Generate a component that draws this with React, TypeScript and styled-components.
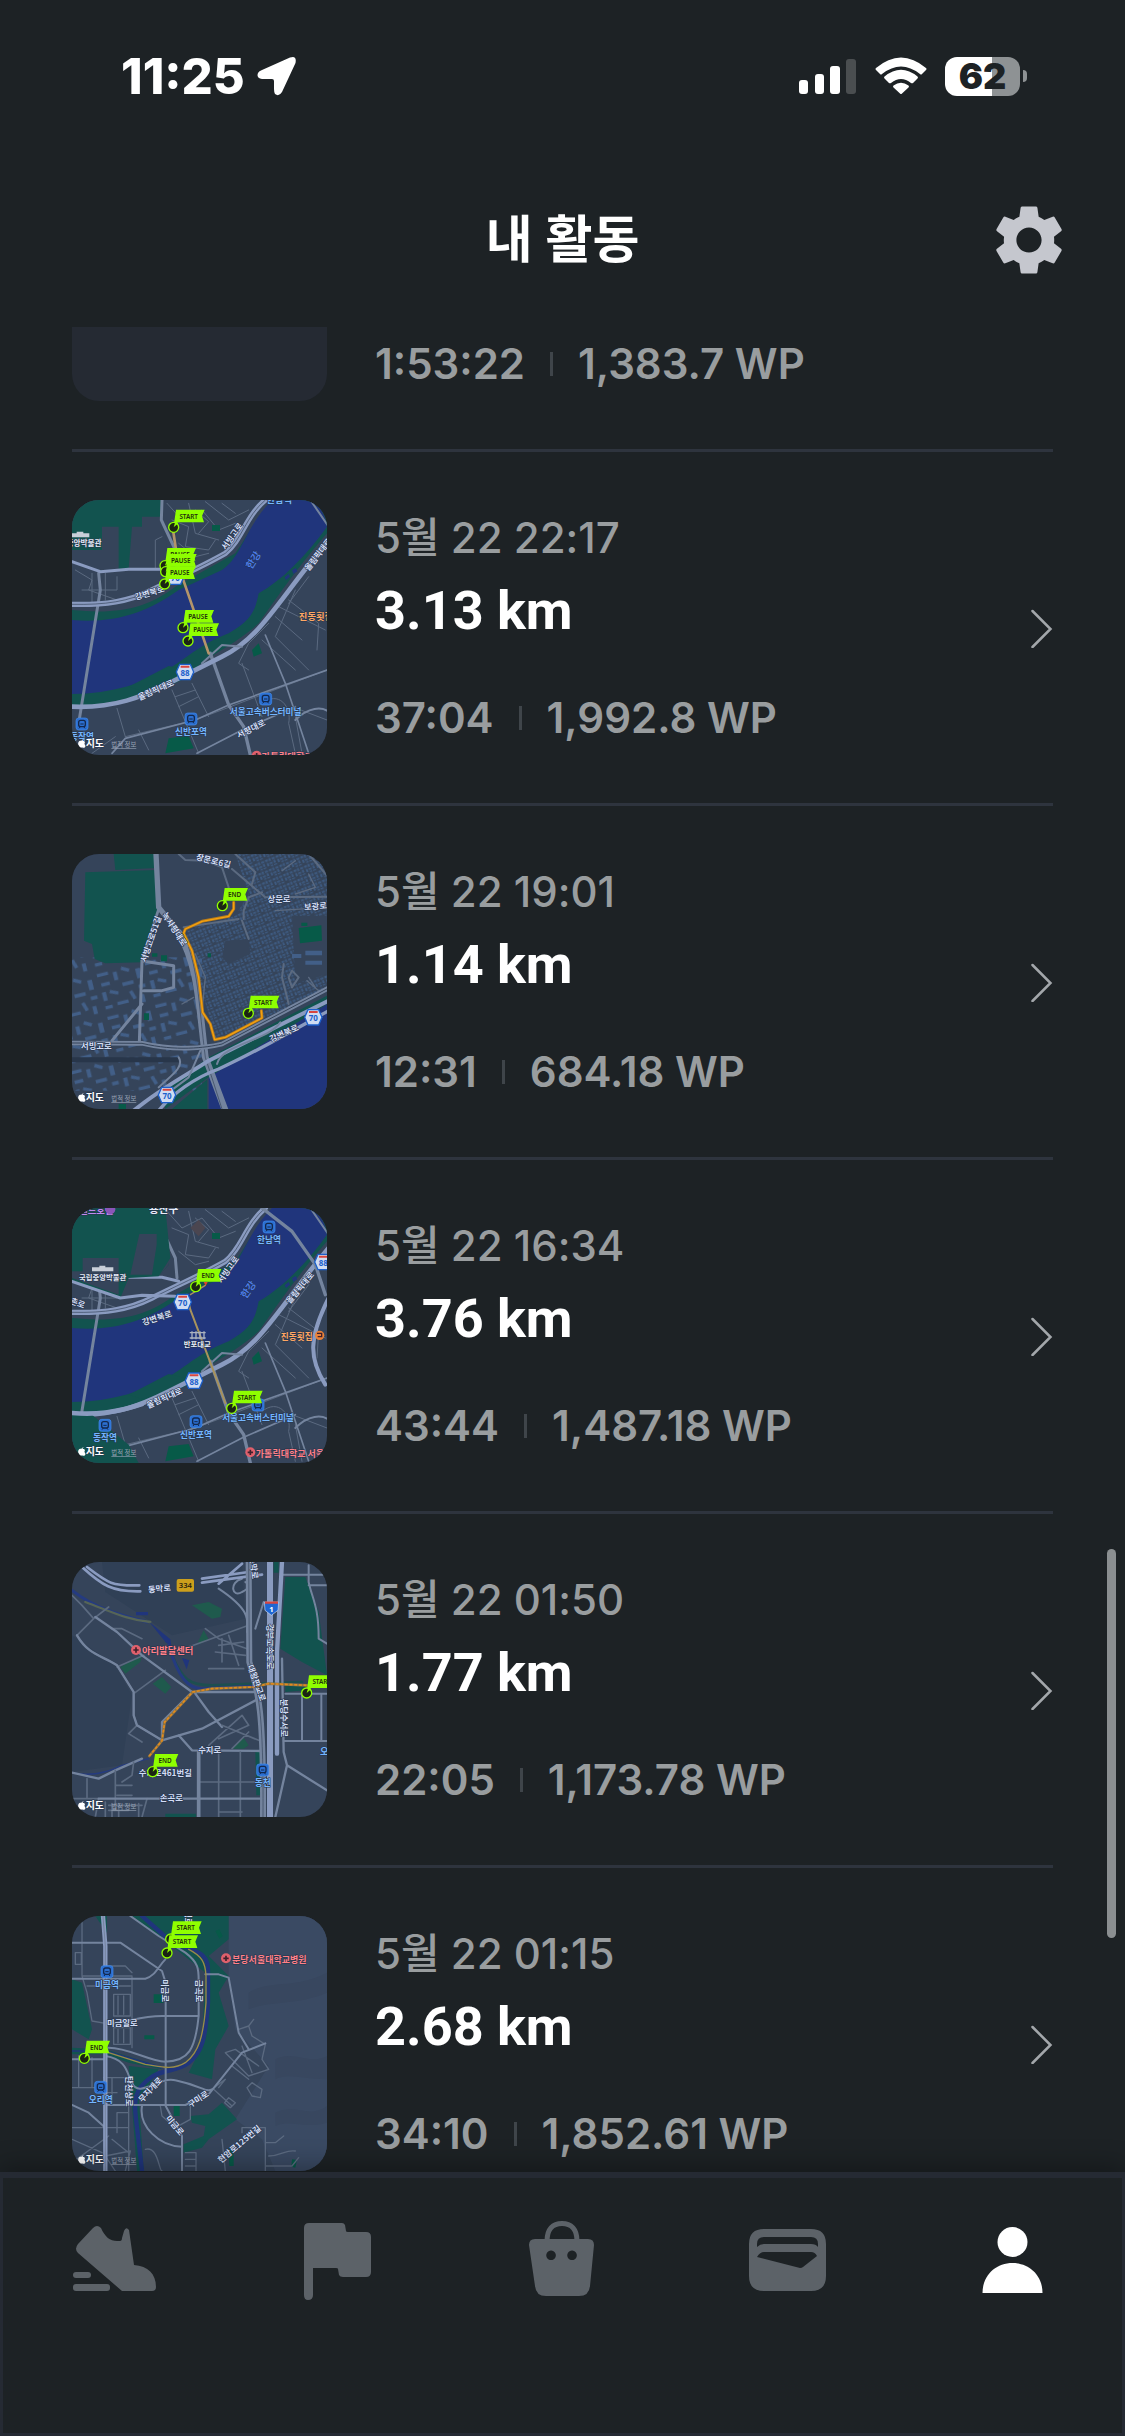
import type { ReactNode } from "react";
import styled, { createGlobalStyle } from "styled-components";
import { MdSettings } from "react-icons/md";

type Point = [number, number];

interface Activity {
  date: string;
  distance: string;
  time: string;
  wp: string;
  map: ReactNode;
}

/* ---------- map parts ---------- */

const C = {
  land: "#35445a",
  water: "#20357c",
  park: "#12534f",
  grass: "#075a48",
  major: "#8a9bc0",
  mid: "#74849e",
  minor: "#5b6a80",
  route: "#f5a20f",
  bridge: "#b3946a",
  flag: "#8fff00",
};

const Roads = ({ d, w = 3, c = C.minor }: { d: string; w?: number; c?: string }) => (
  <path d={d} fill="none" stroke={c} strokeWidth={w} strokeLinejoin="round" strokeLinecap="round" />
);

const Flag = ({ at, label }: { at: Point; label: string }) => {
  const [x, y] = at;
  const w = label === "END" ? 74 : 90;
  return (
    <g>
      <path
        d={`M${x} ${y - 4}L${x + 7} ${y - 53}H${x + w + 3}L${x + w - 5} ${y - 34}L${x + w + 1} ${y - 15}H${x + 12}L${x + 5} ${y}Z`}
        fill={C.flag}
      />
      <circle cx={x} cy={y} r="15" fill="#1b2413" stroke={C.flag} strokeWidth="4" />
      <path d={`M${x} ${y}L${x + 5} ${y - 17}L${x + 14} ${y - 12}Z`} fill={C.flag} />
      <MapText x={x + w / 2} y={y - 26} fontSize="19" fontWeight="600" fill="#22300c" textAnchor="middle">
        {label}
      </MapText>
    </g>
  );
};

const RoadName = ({ at, turn = 0, children }: { at: Point; turn?: number; children: string }) => (
  <Outlined
    x={at[0]}
    y={at[1]}
    fontSize="25"
    fill="#d3def6"
    textAnchor="middle"
    dominantBaseline="central"
    transform={`rotate(${turn} ${at[0]} ${at[1]})`}
  >
    {children}
  </Outlined>
);

const Place = ({ at, size = 28, c = "#e6ecf8", children }: { at: Point; size?: number; c?: string; children: string }) => (
  <Outlined x={at[0]} y={at[1]} fontSize={size} fill={c} textAnchor="middle" dominantBaseline="central">
    {children}
  </Outlined>
);

const Station = ({ at, name }: { at: Point; name?: string }) => {
  const [x, y] = at;
  return (
    <g>
      <rect x={x - 18} y={y - 18} width="36" height="36" rx="8" fill="#2c6fd0" stroke="#3f8df0" strokeWidth="2" />
      <rect x={x - 10} y={y - 11} width="20" height="19" rx="6" fill="none" stroke="#12284f" strokeWidth="4" />
      <path d={`M${x - 9} ${y + 13}L${x - 5} ${y + 8}M${x + 9} ${y + 13}L${x + 5} ${y + 8}M${x - 5} ${y}H${x + 5}`} stroke="#12284f" strokeWidth="3" />
      {name && (
        <Place at={[x, y + 36]} size={26} c="#74b6ff">
          {name}
        </Place>
      )}
    </g>
  );
};

const Hospital = ({ at }: { at: Point }) => (
  <g>
    <circle cx={at[0]} cy={at[1]} r="15" fill="#e0606c" />
    <path d={`M${at[0] - 8} ${at[1]}h16M${at[0]} ${at[1] - 8}v16`} stroke="#40202c" strokeWidth="5" />
  </g>
);

const Shield = ({ at, no }: { at: Point; no: string }) => {
  const [x, y] = at;
  return (
    <g>
      <path d={`M${x - 16} ${y - 23}H${x + 16}L${x + 26} ${y}L${x + 16} ${y + 23}H${x - 16}L${x - 26} ${y}Z`} fill="#cfdcf2" stroke="#1c5fcb" strokeWidth="4" />
      <path d={`M${x - 13} ${y - 16}h26`} stroke="#d8463f" strokeWidth="6" />
      <MapText x={x} y={y + 12} fontSize="24" fontWeight="700" fill="#1c5fcb" textAnchor="middle">
        {no}
      </MapText>
    </g>
  );
};

const MapFrame = ({ children }: { children: ReactNode }) => (
  <Map viewBox="30 30 765 765" aria-hidden="true">
    <defs>
      <pattern id="blocks" width="34" height="30" patternUnits="userSpaceOnUse" patternTransform="rotate(-22)">
        <path d="M2 3h8v7H2zM13 2h6v9h-6zM23 4h9v6h-9zM3 14h6v10H3zM12 15h9v5h-9zM25 13h6v8h-6zM13 23h7v5h-7zM23 24h9v4h-9z" fill="#40608a" />
      </pattern>
      <pattern id="halls" width="148" height="132" patternUnits="userSpaceOnUse" patternTransform="rotate(-14)">
        <path
          d="M6 8h34v10H6zM54 14h12v26H54zM84 4l22 12-5 9-22-12zM122 20h14v30h-14zM12 38h26v11H12zM74 52h34v10H74zM8 66h12v26H8zM34 64l24 10-4 9-24-10zM120 70h20v10h-20zM46 104h34v10H46zM98 80l8 26-10 3-8-26zM8 108h22v10H8zM118 100h12v24h-12z"
          fill="#425f88"
        />
      </pattern>
    </defs>
    <rect x="30" y="30" width="765" height="765" fill={C.land} />
    {children}
    <path d="M58 752c4-3 6-6 6-6s1 4-3 7c4-1 8 1 8 4-3 3-1 8 2 10-2 6-5 7-8 6-3-1-4 0-7 0-8-3-11-18-2-21z" fill="#fff" />
    <Outlined x="71" y="770" fontSize="30" fill="#fff">
      지도
    </Outlined>
    <MapText x="148" y="771" fontSize="19" fill="#98a3b5" textDecoration="underline">
      법적 정보
    </MapText>
  </Map>
);

/* Han river around Banpo bridge, shared by two of the walks */
const RiverBase = () => (
  <>
    <path d="M30 30H300L296 130L320 200L290 235H200L120 245L30 215Z" fill={C.park} />
    <path d="M120 110H170V240L110 240L30 215V180H120Z" fill={C.land} />
    <path d="M210 110H240V80H300L320 200L290 235H200Z" fill={C.land} />
    <path d="M30 360C180 375 260 350 340 290L520 190C560 130 590 70 640 30H795V130C700 240 640 330 590 400C500 480 420 500 380 560C260 620 150 640 30 650Z" fill={C.park} />
    <path d="M30 390C160 400 250 370 350 300L480 240C540 200 550 110 630 30H755C790 70 790 90 795 110C730 200 660 270 590 310C580 360 570 390 500 430C420 460 380 500 330 530C250 580 150 610 30 612Z" fill={C.water} />
    <path d="M200 590L320 528L370 540L330 575L240 604Z" fill={C.park} />
    <path d="M668 262l12-10 4 8-12 10zM690 240l12-6 4 10-12 8z" fill={C.water} />
    <Roads d="M315 40L360 90L420 60L470 120L520 100M380 40L400 130L470 150M430 35L500 90L560 60M330 90L380 110L370 170L440 180L460 150M400 60L440 95L410 130M480 40L520 70M350 160L400 200L440 190M280 235V150L300 140" />
    <Roads d="M40 240L90 270L80 300L165 330M60 300H165V260M90 350V250M130 250V330" />
    <Roads d="M540 520L600 680M620 400L560 460L530 520L560 540M640 380L720 450M680 330L770 400L765 480M700 300L640 440L740 540M600 450L700 540M740 260L680 340M650 350L790 420" />
    <Roads d="M165 655L190 740M190 740L400 690L795 540M330 600L410 790M390 580L440 680M340 620L400 600M350 650L410 620M90 790L160 740M230 720L260 780M600 640C650 600 690 650 680 700L700 790M690 650L795 690M720 790L700 680" />
    <Roads w={5} c={C.mid} d="M150 790L190 745L400 690L500 645L795 540M405 790L540 720L700 650M610 435L670 580L740 790" />
    <Roads w={9} c={C.mid} d="M300 30L298 90L340 180L345 240M110 250L115 300L50 700" />
    <Roads w={10} c={C.mid} d="M445 490L500 645L545 710L565 795" />
    <Roads w={9} c={C.major} d="M30 215L115 245L200 238L300 238L350 250" />
    <Roads w={16} c={C.major} d="M30 343C130 345 200 335 270 300C340 265 420 230 490 190C540 150 550 80 610 30" />
    <Roads w={14} c={C.major} d="M30 650C160 655 240 620 320 580L480 500C600 440 640 340 800 150" />
    <Roads w={6} c={C.mid} d="M420 520L480 465L540 470M745 30L800 110M700 690C740 650 780 650 800 665" />
    <Roads w={2} c={C.land} d="M30 343C130 345 200 335 270 300C340 265 420 230 490 190C540 150 550 80 610 30" />
    <path d="M320 745L380 738L395 775L310 790ZM570 480L590 460L600 490L575 500Z" fill={C.grass} />
    <path d="M450 105h24v18h-24z" fill={C.grass} />
  </>
);

const RiverNightMap = () => (
  <MapFrame>
    <RiverBase />
    <Roads w={8} c={C.bridge} d="M333 120L350 230L440 490" />
    <RoadName at={[262, 306]} turn={-17}>강변북로</RoadName>
    <RoadName at={[508, 137]} turn={-55}>서빙고로</RoadName>
    <RoadName at={[280, 597]} turn={-24}>올림픽대로</RoadName>
    <RoadName at={[766, 192]} turn={-52}>올림픽대로</RoadName>
    <RoadName at={[566, 714]} turn={-27}>서평대로</RoadName>
    <Outlined x="580" y="218" fontSize="30" fill="#4b7bea" textAnchor="middle" transform="rotate(-58 580 214)">한강</Outlined>
    <path d="M30 130h52v12H30zM44 125h20v8H44z" fill="#c8ced8" />
    <Place at={[66, 158]} size={23}>중앙박물관</Place>
    <Place at={[652, 26]} c="#74b6ff">한남역</Place>
    <Shield at={[369, 546]} no="88" />
    <Shield at={[340, 260]} no="70" />
    <Place at={[762, 378]} c="#ffa763">진동횟집</Place>
    <Station at={[611, 627]} name="서울고속버스터미널" />
    <Station at={[387, 687]} name="신반포역" />
    <Station at={[60, 702]} name="동작역" />
    <Hospital at={[584, 797]} />
    <Place at={[676, 797]} c="#ff8088">가톨릭대학교</Place>
    <Flag at={[335, 112]} label="START" />
    <Flag at={[309, 227]} label="PAUSE" />
    <Flag at={[311, 245]} label="PAUSE" />
    <Flag at={[308, 282]} label="PAUSE" />
    <Flag at={[363, 413]} label="PAUSE" />
    <Flag at={[378, 453]} label="PAUSE" />
  </MapFrame>
);

const ItaewonMap = () => (
  <MapFrame>
    <rect x="30" y="340" width="390" height="400" fill="url(#halls)" />
    <path d="M520 30H795V440L460 585L390 330L370 260L520 215L560 150Z" fill="url(#blocks)" opacity="0.8" />
    <path d="M490 290L560 285L565 330L500 360L480 340ZM690 215H795V390L700 420Z" fill={C.land} />
    <path d="M690 330h28v12h-28zM730 320h50v14h-50zM730 350h50v12h-50z" fill="#425f88" />
    <path d="M155 30H278L282 72L160 78ZM70 85L285 78L295 190L240 355L130 358L98 345L90 300L66 290Z" fill={C.park} />
    <path d="M30 640H350V655H30Z" fill="#28364a" />
    <path d="M440 700L795 480V795H440Z" fill={C.water} />
    <path d="M310 795L440 700L795 480V455L440 640L300 740Z" fill={C.park} />
    <path d="M330 795L436 706V795Z" fill={C.park} />
    <path d="M710 252L778 244L780 290L714 298ZM718 236h18v10h-18zM297 334h18v18h-18zM270 328h16v10h-16zM246 508h15v20h-15zM170 780h22v15h-22zM437 328h10v12h-10z" fill={C.grass} />
    <Roads w={6} d="M350 30L370 48L430 50L480 70L500 130L490 160M510 75L610 160L795 158M545 225V200L560 160L600 145M540 230L560 285M520 30L580 85L570 120M680 480L660 400L665 360M690 380L710 400L690 430L680 400ZM740 30L795 95M365 250L530 225" />
    <Roads w={4} d="M740 90L760 130L700 150M660 80L700 50M740 400L760 430M735 410L770 440M400 330L430 400L420 500M360 480L395 460M640 200L795 190" />
    <Roads w={9} c={C.mid} d="M240 350L232 595M240 480L150 590M245 440H300L335 430V365L245 352" />
    <Roads w={16} c={C.mid} d="M282 30L290 190L350 265" />
    <Roads w={8} c={C.mid} d="M290 195L240 350" />
    <Roads w={20} c={C.mid} d="M350 265C410 370 410 480 430 640L490 800" />
    <Roads w={2} c={C.land} d="M380 310C410 400 410 480 430 640L480 795" />
    <Roads w={14} c={C.mid} d="M30 597L240 598C340 622 430 612 480 600L800 432" />
    <Roads w={3} c={C.land} d="M30 597L240 598C340 622 430 612 480 600L800 432" />
    <Roads w={12} c={C.major} d="M215 800C300 730 380 690 440 650C560 590 680 530 800 470" />
    <Roads w={10} c={C.major} d="M290 800C330 750 400 700 470 675C590 620 700 555 800 500" />
    <Roads w={6} c={C.mid} d="M415 620L380 700L300 760M465 660C480 600 620 590 655 535M350 640C370 670 320 700 290 730" />
    <Roads w={9} c="#b57a1c" d="M515 175V195L500 217L420 232L370 255L365 268L390 320L410 400L422 505L445 540L458 587L490 580L600 522L598 500" />
    <Roads w={4} c={C.route} d="M515 175V195L500 217L420 232L370 255L365 268L390 320L410 400L422 505L445 540L458 587L490 580L600 522L598 500" />
    <RoadName at={[455, 48]} turn={14}>장문로6길</RoadName>
    <RoadName at={[651, 162]}>상문로</RoadName>
    <RoadName at={[760, 184]} turn={-5}>보광로</RoadName>
    <RoadName at={[264, 284]} turn={-71}>서빙고로51길</RoadName>
    <RoadName at={[340, 254]} turn={57}>녹사평대로</RoadName>
    <RoadName at={[103, 603]}>서빙고로</RoadName>
    <RoadName at={[665, 565]} turn={-24}>강변북로</RoadName>
    <Shield at={[754, 520]} no="70" />
    <Shield at={[315, 753]} no="70" />
    <Flag at={[481, 185]} label="END" />
    <Flag at={[559, 508]} label="START" />
  </MapFrame>
);

const RiverDayMap = () => (
  <MapFrame>
    <RiverBase />
    <path d="M30 30H310L325 180L290 235L200 240L175 300L30 250Z" fill={C.park} />
    <path d="M62 180H170V290L30 240V220H62ZM232 108H284V140L270 230H205Z" fill={C.land} />
    <Roads w={9} c={C.major} d="M30 250L175 300L240 292L340 295" />
    <path d="M30 640L90 650L200 740L230 795H30Z" fill={C.park} />
    <Roads w={14} c={C.major} d="M30 645C100 650 160 645 240 618" />
    <path d="M385 90L410 65L430 90L410 115Z" fill="#4b4650" />
    <Roads w={10} c={C.mid} d="M600 30L690 100L760 200L790 290" />
    <Roads w={12} c={C.major} d="M800 300C740 420 740 480 790 560" />
    <Roads w={6} c="#a8935c" d="M375 290L385 335L455 520L490 615" />
    <Roads w={4} c="#a8935c" d="M385 290L430 262" />
    <RoadName at={[284, 357]} turn={-18}>강변북로</RoadName>
    <RoadName at={[496, 213]} turn={-55}>서빙고로</RoadName>
    <RoadName at={[306, 597]} turn={-24}>올림픽대로</RoadName>
    <RoadName at={[712, 267]} turn={-50}>올림픽대로</RoadName>
    <RoadName at={[48, 312]} turn={20}>촌로</RoadName>
    <Outlined x="563" y="284" fontSize="30" fill="#4b7bea" textAnchor="middle" transform="rotate(-55 563 278)">한강</Outlined>
    <Place at={[90, 36]} c="#c08af0">그랜드호텔</Place>
    <circle cx="145" cy="34" r="15" fill="#8a55b8" />
    <Place at={[305, 32]} size={32}>용산구</Place>
    <path d="M90 208h64v12H90zM112 203h18v8h-18z" fill="#c8ced8" />
    <Place at={[122, 235]} size={22}>국립중앙박물관</Place>
    <path d="M383 404h48M383 420h48M390 400v24M402 400v24M414 400v24M426 400v24" stroke="#aab2bf" strokeWidth="4" />
    <Place at={[406, 436]} size={22}>반포대교</Place>
    <Shield at={[362, 312]} no="70" />
    <Shield at={[396, 548]} no="88" />
    <Shield at={[784, 192]} no="88" />
    <Place at={[704, 413]} size={26} c="#ffa763">진동횟집</Place>
    <circle cx="773" cy="412" r="14" fill="#e9823a" />
    <path d="M765 406h14v10h-12" fill="none" stroke="#40202c" strokeWidth="4" />
    <Station at={[621, 87]} name="한남역" />
    <Station at={[588, 621]} name="서울고속버스터미널" />
    <Station at={[402, 671]} name="신반포역" />
    <Station at={[129, 682]} name="동작역" />
    <Hospital at={[565, 763]} />
    <Place at={[684, 765]} size={27} c="#ff8088">가톨릭대학교 서울</Place>
    <path d="M425 252h12l-6 12z" fill="#e2452d" />
    <Flag at={[401, 266]} label="END" />
    <Flag at={[509, 631]} label="START" />
  </MapFrame>
);

const SujiMap = () => (
  <MapFrame>
    <path d="M120 30H540L550 200L330 250L130 120ZM30 250L160 340L210 430L180 640L30 660Z" fill="#304056" />
    <path d="M670 75H730L770 180L795 370L720 330L655 290ZM635 30h15v32h-15zM310 785H402V795H310ZM670 395L730 400V415L670 420ZM580 600H597V730H583Z" fill={C.park} />
    <path d="M390 160L440 150L480 170L475 195L450 200ZM408 270L425 235L440 262L415 275ZM300 375L328 405L310 425L272 395ZM175 345L240 310L235 330L190 365ZM510 590L545 558L560 580L545 590Z" fill="#1f5a4d" />
    <Roads w={8} c="#1d4f50" d="M330 310C360 380 380 400 450 400L720 390" />
    <Roads w={9} c="#253b80" d="M30 115C100 170 180 190 255 210M320 280C350 380 380 410 420 410L575 403" />
    <Roads w={7} c="#566556" d="M70 150C150 180 200 205 265 210" />
    <path d="M262 210L325 262L328 282L312 272ZM222 180h36v10h-36zM360 318L382 325L374 352Z" fill={C.water} />
    <Roads w={4} c="#253b80" d="M30 662C90 675 140 660 180 640L260 620" />
    <Roads w={5} d="M45 250L95 200L140 165M95 200L60 160L30 130M45 250C80 310 120 310 165 340L215 420V490L225 520L300 565M165 345L245 310M215 425L310 355M150 230L180 230L240 260M225 520L200 545L240 570M380 285L560 220M430 230L470 260L555 290M440 350H545M480 260V330M500 250L530 340M460 300L550 310M470 280L545 270" />
    <Roads w={7} c={C.mid} d="M100 195L165 240L240 310L390 420L300 510V565M390 420H575M400 425L440 480L480 525M300 565L420 530L590 440M350 550L390 595L595 597M30 662L110 680L160 655L240 620M45 250C80 310 120 310 165 340L215 420V490L225 520L300 565" />
    <Roads w={5} d="M480 520L590 565M440 580L540 490L560 520L470 560M510 590L560 540M160 655V770M215 630L210 670L180 690M160 700H210M165 730H210M30 740L110 740L100 795M75 680V740M470 600V740M535 600V740M410 690H597M470 740V795M535 740V795M470 780H540M130 750V795M150 755V795M170 755V795M230 755V795M140 760H240M140 775H200M255 740L240 795" />
    <Roads w={11} c={C.mid} d="M410 600V795" />
    <Roads w={7} c={C.mid} d="M110 740H600" />
    <Roads w={6} c={C.mid} d="M470 110C560 170 560 200 555 240M540 80C500 90 510 140 540 120C560 110 565 100 550 90M605 150L580 230M740 40V90C750 140 770 160 770 260L795 275M660 68H795M740 100H795M670 425H795M720 430V565M778 430V565M665 567H795" />
    <Roads w={8} c={C.major} d="M60 45C120 100 150 120 235 118M75 45C140 95 150 102 232 100M420 92L600 68M420 80L560 60M470 95L540 35" />
    <Roads w={18} c={C.mid} d="M560 30L562 330C590 420 605 480 603 795" />
    <Roads w={2} c={C.land} d="M560 30L562 330C590 420 605 480 603 795" />
    <Roads w={18} c={C.major} d="M624 30V795" />
    <Roads w={13} c={C.major} d="M660 30L645 300V605" />
    <Roads w={7} c={C.mid} d="M660 320L665 600L675 640L640 795M675 640L795 715" />
    <Roads w={8} c="#8e7444" d="M262 612L300 566L308 510L392 420L450 410L575 405L620 395L735 400" />
    <path d="M262 612L300 566L308 510L392 420L450 410L575 405L620 395L735 400" fill="none" stroke="#e38a1c" strokeWidth="5" strokeDasharray="9 5" />
    <RoadName at={[292, 107]} turn={-5}>동막로</RoadName>
    <rect x="344" y="81" width="52" height="38" rx="6" fill="#cc9f1c" />
    <MapText x="370" y="109" fontSize="23" fontWeight="600" fill="#2b2410" textAnchor="middle">334</MapText>
    <RoadName at={[578, 46]} turn={82}>동막로</RoadName>
    <RoadName at={[587, 392]} turn={70}>대왕판교로</RoadName>
    <RoadName at={[626, 284]} turn={90}>경부고속도로</RoadName>
    <RoadName at={[668, 498]} turn={90}>분당수서로</RoadName>
    <RoadName at={[443, 591]}>수지로</RoadName>
    <RoadName at={[310, 661]}>수지로461번길</RoadName>
    <RoadName at={[328, 736]}>손곡로</RoadName>
    <path d="M607 150H650L648 175L628 190L609 175Z" fill="#1f66d2" stroke="#c7d8f5" strokeWidth="2" />
    <path d="M609 152h39" stroke="#d8463f" strokeWidth="7" />
    <MapText x="628" y="179" fontSize="23" fontWeight="700" fill="#fff" textAnchor="middle">1</MapText>
    <Hospital at={[222, 294]} />
    <Place at={[317, 295]} c="#ff8088">아리발달센터</Place>
    <Station at={[602, 654]} name="동천" />
    <Place at={[800, 598]} c="#74b6ff">오리</Place>
    <Flag at={[734, 423]} label="START" />
    <Flag at={[272, 659]} label="END" />
  </MapFrame>
);

const MigeumMap = () => (
  <MapFrame>
    <path d="M500 30H795V795H640L600 700L520 640L620 480L520 370L500 210Z" fill="#3a4a63" />
    <path d="M560 260C620 220 700 250 795 200V260C700 300 640 280 560 310ZM640 460C700 430 740 480 795 450V520C720 520 680 500 640 520ZM640 620C700 590 740 640 795 600V650C720 670 690 640 640 660Z" fill="#38475f" />
    <path d="M30 220L60 230L90 370L80 400L30 370ZM210 30H500V100L440 150L500 210L470 260L500 360L460 430L450 520L380 500L420 420L430 200L330 120ZM100 30L135 30V80L110 45ZM200 480L290 490L260 540L230 570L245 795H225L210 600ZM385 630L440 625L480 590L525 640L440 700L420 725L365 740V715L425 690L430 660L390 650ZM30 425L130 430L290 480L300 490L200 470L130 445H30Z" fill={C.park} />
    <path d="M275 265h30v26h-30zM247 388h30v12h-30zM335 600h18v30h-18zM500 725L515 720V780H502ZM460 75L472 70L482 90L472 98ZM690 760L705 762L700 785L688 782Z" fill={C.grass} />
    <Roads w={13} c={C.water} d="M240 30L330 110C430 140 440 150 438 210V290C430 400 420 440 380 470C340 500 290 490 260 520C220 550 215 580 222 640L240 795" />
    <Roads w={5} c={C.water} d="M30 435H130L300 485" />
    <Roads w={4} d="M60 30V210H210V425M75 240H205M60 210L75 260L90 345L130 352M155 265H205V330H155ZM168 270V325M185 270V325M155 365H205V415H155ZM168 370V410M185 370V410M130 260V180H190L210 200M40 140H58V175H40ZM50 450V545M90 455V545M30 545H125M125 515H200V620H165V680M150 515V590M130 560H165M160 795L130 750L205 735L190 795M30 700L120 740M200 600V795M30 665H200M150 700L200 740M30 770L140 690" />
    <Roads w={4} d="M530 370L560 360L575 340M560 360L570 390L610 415L600 460L620 490L560 510L490 440L520 430L590 480M540 420L570 500M510 480L560 520M470 545L490 520L450 550M555 545L570 530L600 550L595 575L570 570ZM500 575L520 590L505 605L488 590ZM455 550L510 600M540 665H610V795M540 680V665M610 710H640L665 690M620 750C660 750 670 730 700 735M370 740H402V795M370 760H402M370 780H402M480 700L490 795M250 730C290 720 290 795 300 795M385 600V640L340 665L300 630L295 600M610 780H690L710 755" />
    <Roads w={6} c={C.mid} d="M205 30L290 90L370 140C410 170 410 190 410 225V330C400 430 380 465 310 467C260 465 200 425 140 425M30 110H175L300 195L311 230V600L360 690V795M30 218H250C280 210 290 180 310 160M130 355C200 350 230 330 300 330H410M130 450C200 460 195 510 210 530C230 580 290 510 340 523C420 540 430 560 450 550M130 597H370L440 565L540 440L610 412M430 205H470L500 215L530 380L560 430M240 600C230 660 290 720 360 722M30 597L80 620L130 665M30 460H130" />
    <Roads w={13} c={C.major} d="M123 30L130 120V795" />
    <Roads w={3} c={C.mid} d="M123 30L130 120V795" />
    <Roads w={4} c="#988c49" d="M380 130C420 150 430 170 432 210V290C425 390 410 440 370 470C330 495 290 480 250 475L140 440" />
    <RoadName at={[313, 254]} turn={90}>미금로</RoadName>
    <RoadName at={[413, 255]} turn={90}>금곡로</RoadName>
    <RoadName at={[382, 24]} turn={90}>불정로</RoadName>
    <RoadName at={[181, 349]}>미금일로</RoadName>
    <RoadName at={[203, 556]} turn={90}>탄천상로</RoadName>
    <RoadName at={[263, 549]} turn={-47}>무지개로</RoadName>
    <RoadName at={[407, 577]} turn={-33}>구미로</RoadName>
    <RoadName at={[341, 656]} turn={50}>미금로</RoadName>
    <RoadName at={[530, 712]} turn={-40}>현암로125번길</RoadName>
    <Station at={[135, 197]} name="미금역" />
    <Station at={[116, 544]} name="오리역" />
    <Hospital at={[492, 157]} />
    <Place at={[622, 159]} size={27} c="#ff8088">분당서울대학교병원</Place>
    <Flag at={[326, 99]} label="START" />
    <Flag at={[315, 141]} label="START" />
    <Flag at={[67, 457]} label="END" />
  </MapFrame>
);

/* ---------- icons ---------- */

const ShoeIcon = () => (
  <Glyph viewBox="0 0 90 90">
    <path d="M25 11Q29 7 33 11C37 20 42 24 49 24H52Q54 24 54 21L56 14Q58 9 61 13L66 48C80 49 88 57 88 70Q88 74 84 74H54L10 36Q6 32 10 27Z" />
    <rect x="5" y="55" width="18" height="6" rx="3" />
    <rect x="5" y="67" width="37" height="7" rx="3" />
  </Glyph>
);

const FlagIcon = () => (
  <Glyph viewBox="0 0 90 90">
    <path d="M16 6H49Q51 6 52 8L53 14Q53 15 55 15H73Q78 15 78 20V55Q78 60 73 60H50Q47 60 46 58L45 52Q45 51 43 51H20V78Q20 83 15 83Q11 83 11 78V11Q11 6 16 6Z" />
  </Glyph>
);

const BagIcon = () => (
  <Glyph viewBox="0 0 90 90">
    <path d="M29 24C29 12 35 6.500 44 6.500C53 6.500 59 12 59 24" fill="none" stroke="currentColor" strokeWidth="5" />
    <path
      fillRule="evenodd"
      d="M17 22H70Q76 22 76 28L72 69Q71 79 61 79H28Q18 79 17 69L11 28Q11 22 17 22ZM33 33.500a4.800 4.800 0 1 0 .1 0ZM54 33.500a4.800 4.800 0 1 0 .1 0Z"
    />
  </Glyph>
);

const WalletIcon = () => (
  <Glyph viewBox="0 0 90 90">
    <path
      fillRule="evenodd"
      d="M21 12H68Q83 12 83 27V59Q83 74 68 74H21Q6 74 6 59V27Q6 12 21 12ZM21 20Q14 20 14 27V30Q17 27 21 27H68Q73 27 75 30V27Q75 20 68 20ZM21 35Q17 35 14 40L57 51Q59 51 60 50L74 39Q72 35 68 35Z"
    />
  </Glyph>
);

const PersonIcon = () => (
  <Glyph viewBox="0 0 90 90">
    <circle cx="44.500" cy="25" r="15" />
    <path d="M14.500 76C14.500 58 28 46 44.500 46S74.500 58 74.500 76Z" />
  </Glyph>
);

const LocationIcon = () => (
  <svg width="40" height="40" viewBox="0 0 40 40" fill="#fff" aria-hidden="true">
    <path d="M33 1.500Q40-1 38.500 7L25 36Q22 41 18 38Q17 36 17 33V25Q17 23 15 23H5Q-1 22 1 17Q2 15 5 14Z" />
  </svg>
);

const SignalIcon = () => (
  <svg width="58" height="36" viewBox="0 0 58 36" fill="#fff" aria-hidden="true">
    <rect x="0" y="22" width="9" height="14" rx="3" />
    <rect x="16" y="16" width="9" height="20" rx="3" />
    <rect x="31" y="8" width="10" height="28" rx="3" />
    <rect x="47" y="1" width="10" height="35" rx="3" opacity="0.2" />
  </svg>
);

const WifiIcon = () => (
  <svg width="52" height="38" viewBox="0 0 52 38" fill="#fff" aria-hidden="true">
    <path d="M1 11Q26-10 51 11Q52 12 51 13L47 17Q46 18 45 17Q26 2 7 17Q6 18 5 17L1 13Q0 12 1 11Z" />
    <path d="M9.500 19.500Q26 6 42.500 19.500Q43.500 20.500 42.500 21.500L38 26Q37 26.500 36 26Q26 18 16 26Q15 26.500 14 26L9.500 21.500Q8.500 20.500 9.500 19.500Z" />
    <path d="M18.500 28.500Q26 23 33.500 28.500Q34.500 29.500 33.500 30.500L27 36.500Q26 37.500 25 36.500L18.500 30.500Q17.500 29.500 18.500 28.500Z" />
  </svg>
);

const Chevron = () => (
  <svg width="22" height="40" viewBox="0 0 22 40" fill="none" aria-hidden="true">
    <path d="M1.500 3L19.500 21L1.500 39" stroke="#a3a7ab" strokeWidth="2.500" strokeLinecap="round" />
  </svg>
);

/* ---------- screen ---------- */

const activities: Activity[] = [
  { date: "5월 22 22:17", distance: "3.13 km", time: "37:04", wp: "1,992.8 WP", map: <RiverNightMap /> },
  { date: "5월 22 19:01", distance: "1.14 km", time: "12:31", wp: "684.18 WP", map: <ItaewonMap /> },
  { date: "5월 22 16:34", distance: "3.76 km", time: "43:44", wp: "1,487.18 WP", map: <RiverDayMap /> },
  { date: "5월 22 01:50", distance: "1.77 km", time: "22:05", wp: "1,173.78 WP", map: <SujiMap /> },
  { date: "5월 22 01:15", distance: "2.68 km", time: "34:10", wp: "1,852.61 WP", map: <MigeumMap /> },
];

const tabs = [
  { label: "걷기", icon: <ShoeIcon /> },
  { label: "챌린지", icon: <FlagIcon /> },
  { label: "상점", icon: <BagIcon /> },
  { label: "지갑", icon: <WalletIcon /> },
  { label: "내 활동", icon: <PersonIcon />, active: true },
];

const App = () => {
  return (
    <>
      <GlobalStyle />
      <Screen>
        <StatusBar>
          <Clock>
            11:25
            <LocationIcon />
          </Clock>
          <StatusIcons>
            <SignalIcon />
            <WifiIcon />
            <Battery>
              <BatteryBody>62</BatteryBody>
              <BatteryCap />
            </Battery>
          </StatusIcons>
        </StatusBar>
        <Header>
          <Title>내 활동</Title>
          <SettingsButton type="button" aria-label="설정">
            <MdSettings />
          </SettingsButton>
        </Header>
        <ListArea>
          <List>
            <CutRow>
              <Thumb />
              <Info>
                <Stats>
                  <span>1:53:22</span>
                  <Bar />
                  <span>1,383.7 WP</span>
                </Stats>
              </Info>
            </CutRow>
            {activities.map((item) => (
              <li key={item.date}>
                <Row href="#">
                  <Thumb>{item.map}</Thumb>
                  <Info>
                    <DateText>{item.date}</DateText>
                    <Distance>{item.distance}</Distance>
                    <Stats>
                      <span>{item.time}</span>
                      <Bar />
                      <span>{item.wp}</span>
                    </Stats>
                  </Info>
                  <Chevron />
                </Row>
              </li>
            ))}
          </List>
          <ScrollThumb />
        </ListArea>
        <TabBar>
          {tabs.map((tab) => (
            <Tab key={tab.label} type="button" aria-label={tab.label} $active={tab.active}>
              {tab.icon}
            </Tab>
          ))}
        </TabBar>
      </Screen>
    </>
  );
};

export default App;

const GlobalStyle = createGlobalStyle`
  * {
    box-sizing: border-box;
  }
  body {
    margin: 0;
    background: #1d2225;
    font-family: Inter, "Noto Sans CJK KR", sans-serif;
  }
`;

const Screen = styled.div`
  display: flex;
  flex-direction: column;
  height: 100vh;
  background: #1d2225;
  color: #fff;
`;

const StatusBar = styled.div`
  display: flex;
  flex-shrink: 0;
  align-items: center;
  justify-content: space-between;
  height: 152px;
  padding: 0 98px 0 121px;
`;

const Clock = styled.div`
  display: flex;
  align-items: center;
  gap: 12px;
  font-size: 49px;
  font-weight: 800;
`;

const StatusIcons = styled.div`
  display: flex;
  align-items: center;
  gap: 18px;
`;

const Battery = styled.div`
  display: flex;
  align-items: center;
  gap: 3px;
`;

const BatteryBody = styled.div`
  width: 75px;
  height: 39px;
  border-radius: 12px;
  background: linear-gradient(to right, #fff 63%, #8e9294 63%);
  color: #1d2225;
  font-size: 36px;
  font-weight: 900;
  line-height: 39px;
  text-align: center;
`;

const BatteryCap = styled.div`
  width: 4px;
  height: 12px;
  border-radius: 0 4px 4px 0;
  background: #8e9294;
`;

const Header = styled.header`
  display: grid;
  grid-template-columns: 1fr auto 1fr;
  flex-shrink: 0;
  align-items: center;
  height: 175px;
  padding: 0 54px;
`;

const Title = styled.h1`
  grid-column: 2;
  margin: 0;
  font-size: 51px;
  font-weight: 600;
  line-height: 64px;
`;

const SettingsButton = styled.button`
  display: flex;
  justify-self: end;
  padding: 0;
  border: none;
  background: none;
  color: #c5c7ce;
  font-size: 84px;
`;

const ListArea = styled.main`
  position: relative;
  flex: 1;
  min-height: 0;
  overflow: hidden;
`;

const List = styled.ul`
  margin: 0;
  padding: 0 72px;
  list-style: none;
`;

const CutRow = styled.li`
  display: flex;
  align-items: flex-end;
  gap: 48px;
  height: 122px;
  padding-bottom: 48px;
  overflow: hidden;
`;

const Row = styled.a`
  display: flex;
  align-items: center;
  gap: 48px;
  padding: 48px 0;
  border-top: 3px solid #2e343e;
  color: inherit;
  text-decoration: none;
`;

const Thumb = styled.div`
  flex-shrink: 0;
  width: 255px;
  height: 255px;
  border-radius: 27px;
  background: #252a33;
  overflow: hidden;
`;

const Info = styled.div`
  display: flex;
  flex: 1;
  flex-direction: column;
  justify-content: flex-end;
  height: 255px;
  padding-bottom: 12px;
`;

const DateText = styled.div`
  color: #999d9f;
  font-size: 42px;
  font-weight: 500;
  line-height: 50px;
`;

const Distance = styled.div`
  margin: 16px 0 50px;
  font-family: Roboto, sans-serif;
  font-size: 54px;
  font-weight: 700;
  line-height: 64px;
`;

const Stats = styled.div`
  display: flex;
  align-items: center;
  gap: 25px;
  color: #999d9f;
  font-size: 42px;
  font-weight: 600;
  line-height: 50px;
`;

const Bar = styled.span`
  width: 3px;
  height: 24px;
  background: #3f454a;
`;

const ScrollThumb = styled.div`
  position: absolute;
  right: 9px;
  bottom: 234px;
  width: 9px;
  height: 389px;
  border-radius: 5px;
  background: #8b8f91;
`;

const TabBar = styled.nav`
  position: relative;
  display: flex;
  flex-shrink: 0;
  height: 264px;
  padding-top: 42px;
  border-top: 3px solid #252a33;
  background: #1d2225;
  box-shadow:
    inset 0 0 0 3px #252a33,
    0 -6px 24px rgba(0, 0, 0, 0.3);
`;

const Tab = styled.button<{ $active?: boolean }>`
  display: flex;
  flex: 1;
  align-items: flex-start;
  justify-content: center;
  padding: 0;
  border: none;
  background: none;
  color: ${({ $active }) => ($active ? "#fff" : "#5c6268")};
`;

const Glyph = styled.svg`
  width: 90px;
  height: 90px;
  fill: currentColor;
`;

const Map = styled.svg`
  display: block;
  width: 100%;
  height: 100%;
`;

const MapText = styled.text`
  font-family: "Noto Sans", "Noto Sans CJK KR", sans-serif;
`;

const Outlined = styled.text`
  font-family: "Noto Sans CJK KR", sans-serif;
  font-weight: 700;
  paint-order: stroke;
  stroke: #25334a;
  stroke-width: 3px;
`;
